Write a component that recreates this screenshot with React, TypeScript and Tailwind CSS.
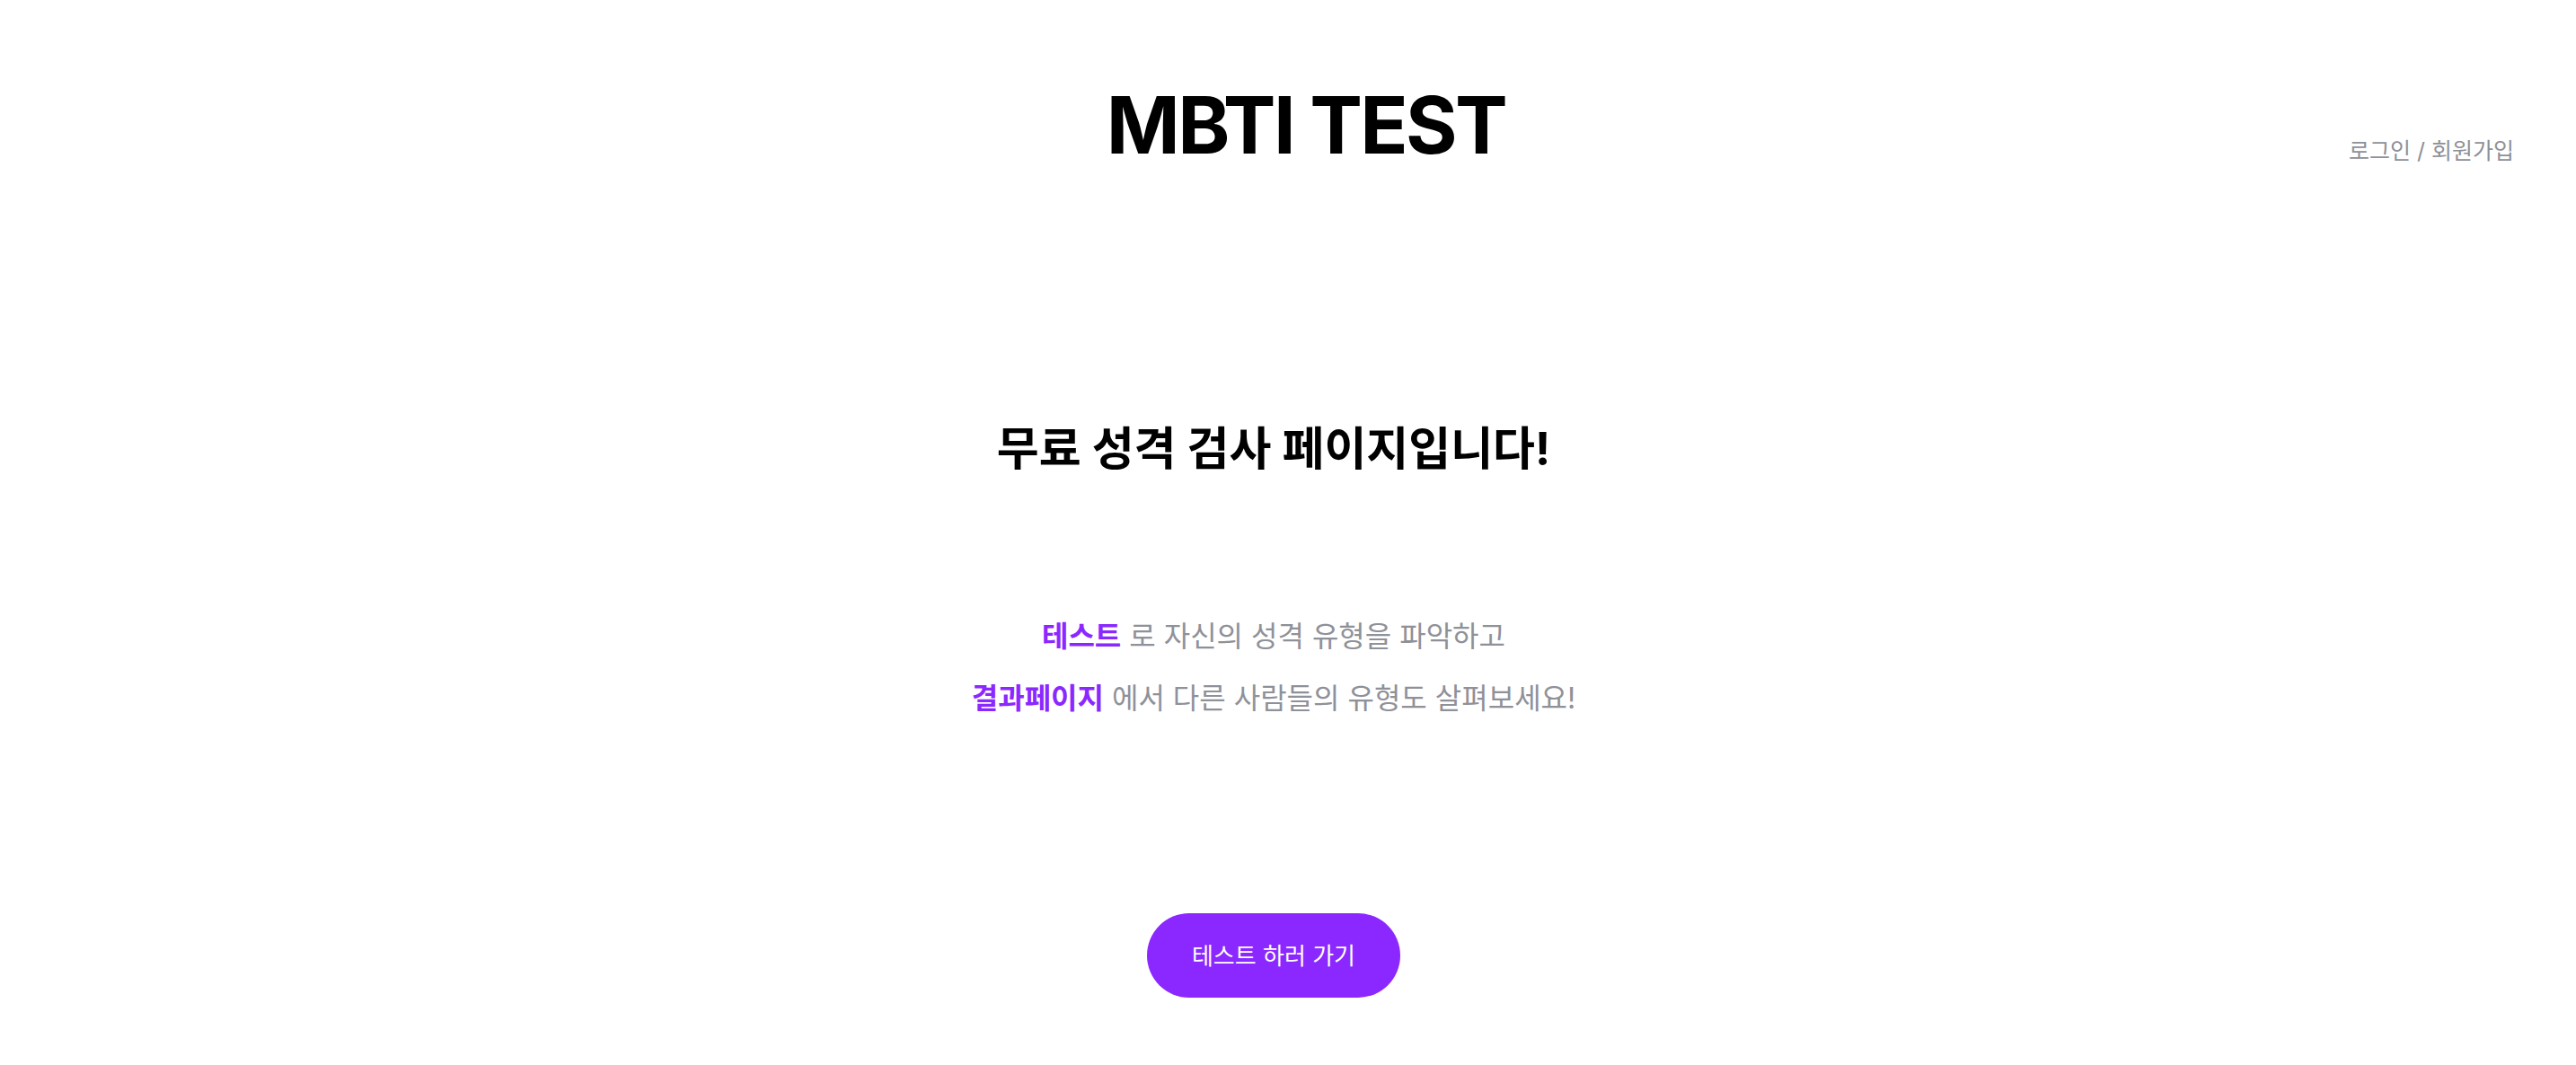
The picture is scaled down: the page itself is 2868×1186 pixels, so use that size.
import React from 'react';

const font = "font-['Inter','Noto_Sans_CJK_KR',sans-serif]";

export default function App() {
  return (
    <div className={`min-h-screen w-full bg-white ${font}`}>
      <div className="pr-[32px]">
        {/* header */}
        <header className="grid grid-cols-[1fr_auto_1fr] items-end pt-[95px] pl-[72px]">
          <div />
          <h1 className="text-[88px] font-bold leading-none tracking-[-0.03em] text-black">MBTI TEST</h1>
          <div className="flex justify-end pr-[37px] pb-[2px]">
            <a className="text-[25px] leading-none text-[#8e9098] cursor-pointer">로그인 / 회원가입</a>
          </div>
        </header>

        <main className="flex flex-col items-center">
          <h2 className="mt-[291px] text-[51px] font-bold leading-[52px] text-black">
            무료 성격 검사 페이지입니다!
          </h2>

          <div className="mt-[148px] text-center text-[32px] leading-[69px] text-[#8f9199]">
            <p>
              <span className="font-bold text-[#8b28ff]">테스트</span> 로 자신의 성격 유형을 파악하고
            </p>
            <p>
              <span className="font-bold text-[#8b28ff]">결과페이지</span> 에서 다른 사람들의 유형도 살펴보세요!
            </p>
          </div>

          <button
            type="button"
            className="mt-[205px] flex h-[94px] w-[282px] items-center justify-center rounded-full bg-[#8b28ff] text-[26px] text-white"
          >
            테스트 하러 가기
          </button>
        </main>
      </div>
    </div>
  );
}
